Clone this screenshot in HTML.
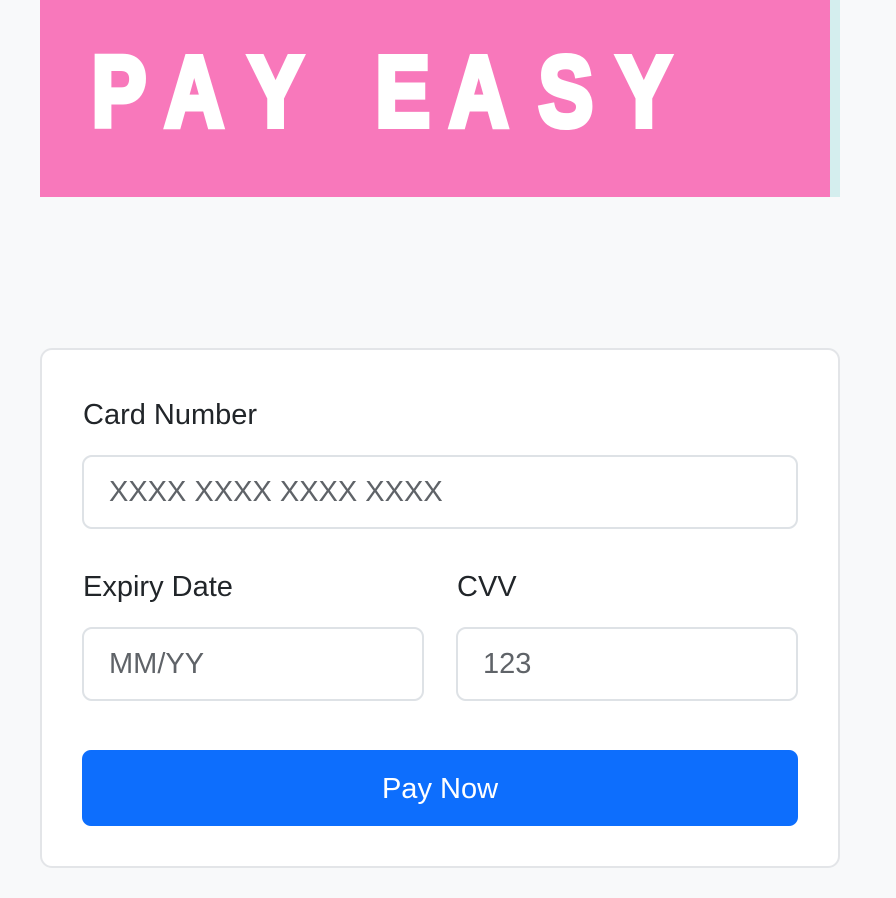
<!DOCTYPE html>
<html><head><meta charset="utf-8"><style>
body{margin:0;background:#f8f9fa;width:896px;height:898px;overflow:hidden;font-family:"Liberation Sans",sans-serif;position:relative}
.banner{position:absolute;left:40px;top:0;width:800px;height:197px;background:#d4eeee}
.pink{position:absolute;left:0;top:0;width:790px;height:197px;background:#f878bb}
.card{position:absolute;left:40px;top:348px;width:796px;height:516px;background:#fff;border:2px solid #e3e5e8;border-radius:12px}
.lbl{position:absolute;font-size:29px;color:#212529}
.inp{position:absolute;border:2px solid #dee2e6;border-radius:10px;font-size:29px;color:#5f6368;line-height:70px;padding-left:25px;box-sizing:border-box;height:74px}
.btn{position:absolute;left:40px;top:400px;width:716px;height:76px;background:#0d6efd;border-radius:9px;color:#fff;font-size:29px;text-align:center;line-height:78px}
</style></head><body>
<div class="banner"><div class="pink">
<svg width="790" height="197" style="position:absolute;left:0;top:0">
<g transform="scale(0.82,1)" fill="#fff" stroke="#fff" stroke-width="6" stroke-linejoin="miter" font-family="Liberation Sans" font-weight="bold" font-size="100">
<text x="63" y="126">P</text>
<text x="152" y="126">A</text>
<text x="254" y="126">Y</text>
<text x="409" y="126">E</text>
<text x="499" y="126">A</text>
<text x="608" y="126">S</text>
<text x="703" y="126">Y</text>
</g></svg>
</div></div>
<div class="card">
<div class="lbl" style="left:41px;top:49px">Card Number</div>
<div class="inp" style="left:40px;top:105px;width:716px">XXXX XXXX XXXX XXXX</div>
<div class="lbl" style="left:41px;top:221px">Expiry Date</div>
<div class="inp" style="left:40px;top:277px;width:342px">MM/YY</div>
<div class="lbl" style="left:415px;top:221px">CVV</div>
<div class="inp" style="left:414px;top:277px;width:342px">123</div>
<div class="btn">Pay Now</div>
</div>
</body></html>
